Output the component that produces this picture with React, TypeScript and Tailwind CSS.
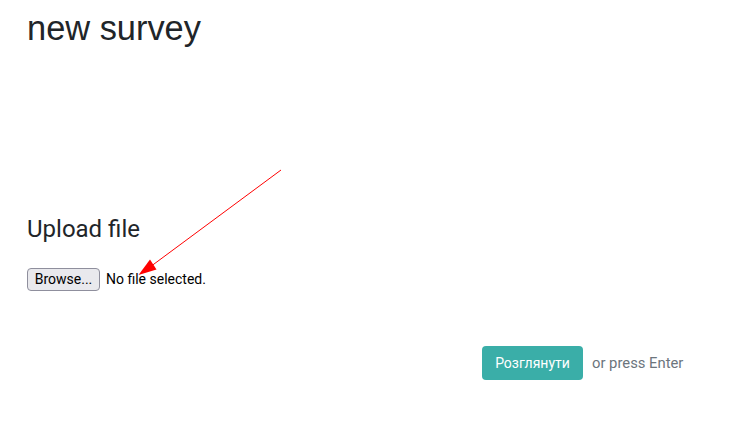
import React from "react";

export default function App() {
  return (
    <div className="relative w-[735px] h-[430px] bg-white overflow-hidden">
      <div className="flex flex-col pl-[27px]">
        <h1 className="mt-[8px] text-[34.4px] leading-[1.2] text-[#212529] font-['Liberation_Sans',Arial,sans-serif]">
          new survey
        </h1>
        <h2 className="mt-[166px] text-[24px] leading-[1.2] text-[#212529] font-['Roboto',sans-serif]">
          Upload file
        </h2>
        <div className="mt-[24px] flex items-center gap-[6px] font-['Roboto',sans-serif] text-[14px] text-[#000]">
          <span className="h-[23px] w-[73px] flex items-center justify-center rounded-[4px] border border-[#8f8f9d] bg-[#e9e9ed] text-[14px] text-black">
            Browse...
          </span>
          <span>No file selected.</span>
        </div>
        <div className="mt-[55px] flex items-center pl-[455px] gap-[9px] font-['Roboto',sans-serif] text-[14px]">
          <span className="h-[34px] w-[101px] flex items-center justify-center rounded-[4px] bg-[#3aaea8] text-white">
            Розглянути
          </span>
          <span className="text-[14.8px] text-[#6c757d]">or press Enter</span>
        </div>
      </div>
      <svg className="absolute left-0 top-0" width="735" height="430" viewBox="0 0 735 430">
        <line x1="281" y1="170" x2="150" y2="267" stroke="#ff0000" strokeWidth="1" />
        <polygon points="138.5,275 150,259.5 156.5,269.5" fill="#ff0000" />
      </svg>
    </div>
  );
}
